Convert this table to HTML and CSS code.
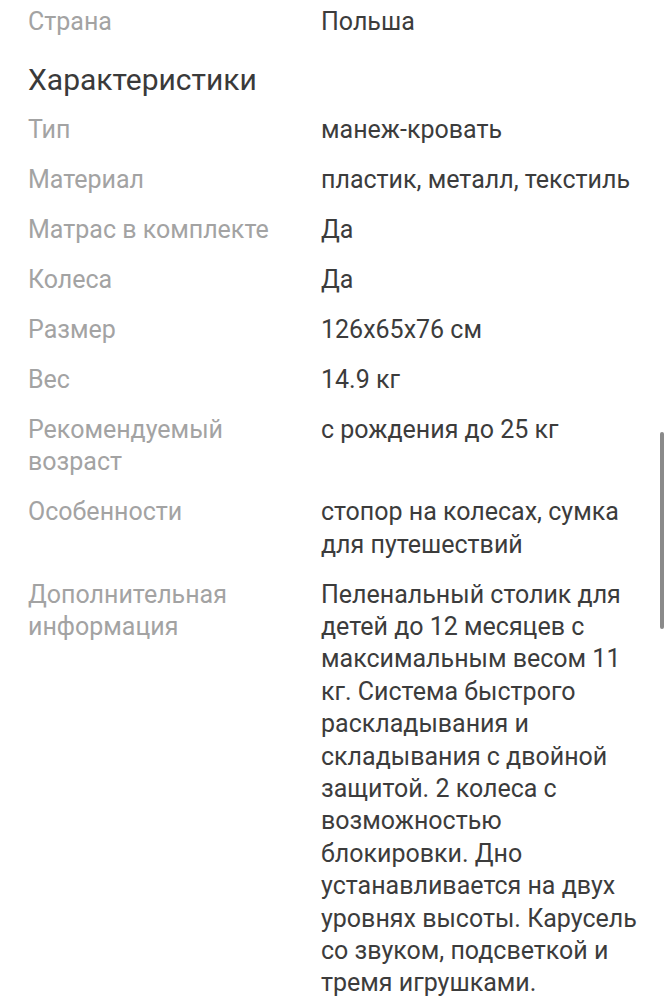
FILE: index.html
```html
<!DOCTYPE html>
<html lang="ru">
<head>
    <meta charset="UTF-8">
    <meta name="viewport" content="width=device-width, initial-scale=1.0">
    <title>Характеристики</title>
    <link rel="stylesheet" href="styles.css">
</head>
<body>
    <div class="specs">
        <div class="row">
            <div class="label">Страна</div>
            <div class="value">Польша</div>
        </div>
        <h2>Характеристики</h2>
        <div class="row">
            <div class="label">Тип</div>
            <div class="value">манеж-кровать</div>
        </div>
        <div class="row">
            <div class="label">Материал</div>
            <div class="value">пластик, металл, текстиль</div>
        </div>
        <div class="row">
            <div class="label">Матрас в комплекте</div>
            <div class="value">Да</div>
        </div>
        <div class="row">
            <div class="label">Колеса</div>
            <div class="value">Да</div>
        </div>
        <div class="row">
            <div class="label">Размер</div>
            <div class="value">126x65x76 см</div>
        </div>
        <div class="row">
            <div class="label">Вес</div>
            <div class="value">14.9 кг</div>
        </div>
        <div class="row">
            <div class="label">Рекомендуемый возраст</div>
            <div class="value">с рождения до 25 кг</div>
        </div>
        <div class="row">
            <div class="label">Особенности</div>
            <div class="value">стопор на колесах, сумка для путешествий</div>
        </div>
        <div class="row">
            <div class="label">Дополнительная информация</div>
            <div class="value">Пеленальный столик для детей до 12 месяцев с максимальным весом 11 кг. Система быстрого раскладывания и складывания с двойной защитой. 2 колеса с возможностью блокировки. Дно устанавливается на двух уровнях высоты. Карусель со звуком, подсветкой и тремя игрушками.</div>
        </div>
    </div>
    <div class="scrollbar"></div>
</body>
</html>
```

FILE: styles.css
```css
* {
    margin: 0;
    padding: 0;
}

body {
    font-family: 'Roboto', sans-serif;
    background-color: #fff;
    color: #3c3c3c;
}

.specs {
    padding: 6px 28px 0 28px;
}

.row {
    display: grid;
    grid-template-columns: 265px 1fr;
    column-gap: 28px;
    font-size: 25px;
    line-height: 32.4px;
    margin-bottom: 17.6px;
}

.specs > .row:first-child {
    margin-bottom: 23.6px;
}

.label {
    color: #a3a3a3;
}

.value {
    color: #3c3c3c;
}

.specs h2 {
    font-size: 30px;
    font-weight: 400;
    line-height: 36px;
    color: #3a3a3a;
    margin-bottom: 15.8px;
}

.scrollbar {
    position: absolute;
    top: 432px;
    left: 660px;
    width: 4px;
    height: 197px;
    border-radius: 2px;
    background-color: #8a8a8a;
}
```
